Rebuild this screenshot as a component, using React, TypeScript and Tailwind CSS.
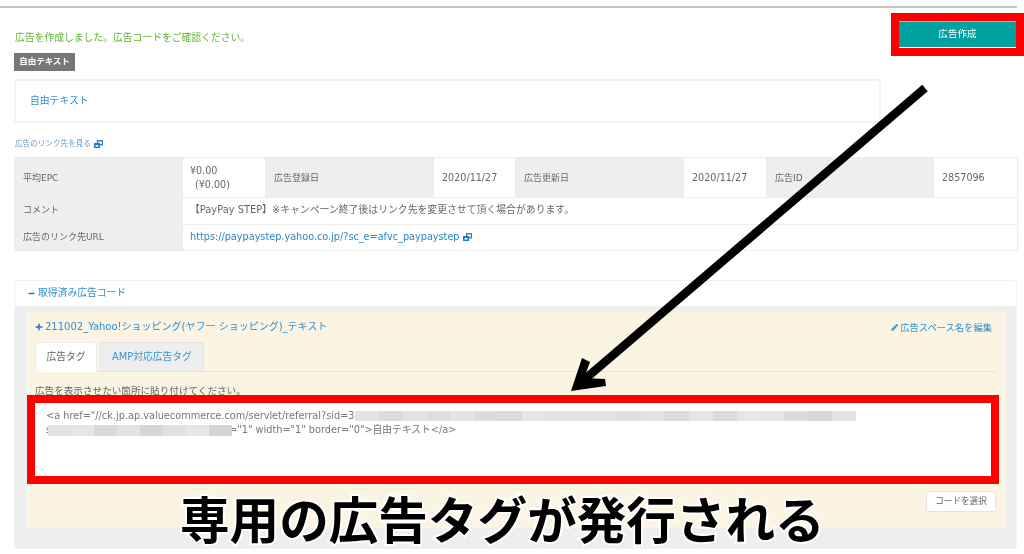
import React from "react";
import { FaMinus, FaPlus, FaPencilAlt } from "react-icons/fa";

const font = "font-['DejaVu_Sans','Noto_Sans_CJK_JP',sans-serif]";

function ExtIcon({ className }: { className?: string }) {
  return (
    <svg viewBox="0 0 9 8" className={className} fill="none" stroke="#1f78c8">
      <rect x="3.5" y="0.75" width="5" height="4" strokeWidth="1.3" />
      <rect x="0.5" y="3.5" width="5" height="4" fill="#1f78c8" strokeWidth="1" stroke="#1f78c8" />
      <rect x="1.6" y="5" width="2.8" height="1.6" fill="#fff" stroke="none" />
    </svg>
  );
}

const th = "bg-[#eeeeee] border border-[#ececec] px-2 text-left font-normal text-[#666] text-[9px] align-middle";
const td = "bg-white border border-[#ececec] px-2 text-[#666] text-[9.6px] align-middle";

const blur1 = [
  "bg-[#e4e4e4]", "bg-[#dcdcdc]", "bg-[#e5e5e5]", "bg-[#dedede]", "bg-[#e5e5e5]", "bg-[#dddddd]", "bg-[#dadada]",
  "bg-[#e6e6e6]", "bg-[#e5e5e5]", "bg-[#e4e4e4]", "bg-[#e2e2e4]", "bg-[#e1e1e3]", "bg-[#e2e2e2]", "bg-[#dbdbdb]",
  "bg-[#e6e6e6]", "bg-[#dbdbdb]", "bg-[#e7e7e7]", "bg-[#e6e6e6]", "bg-[#dddddd]", "bg-[#d8d8d8]", "bg-[#e3e3e3]",
];
const blur2 = [
  "bg-[#e3e3e3]", "bg-[#e6e6e6]", "bg-[#d9d9d9]", "bg-[#e2e2e2]", "bg-[#d6d6d6]", "bg-[#e0e0e0]", "bg-[#e6e6e6]", "bg-[#d4d4d4]",
];

export default function App() {
  return (
    <div className={`relative w-[1024px] h-[554px] overflow-hidden bg-white ${font} blur-[0.35px]`}>
      <div className="w-[1017px] pt-[6px]">
        <div className="h-[2px] bg-[#c4c4c4]" />
        <div className="pl-[14px]">
          <p className="mt-[24px] h-[12px] leading-[12px] pl-[1px] text-[9.8px] text-[#5fb336]">広告を作成しました。広告コードをご確認ください。</p>
          <div className="mt-[9px] w-[61px] h-[18px] leading-[17px] bg-[#777777] text-white text-[8.5px] font-bold text-center">自由テキスト</div>
          <div className="mt-[8px] w-[867px] h-[44px] border-2 border-[#f2f2f2] rounded-[3px] flex items-center pl-[14px] text-[9.8px] text-[#2f8fd0]">自由テキスト</div>
          <div className="mt-[15px] h-[12px] flex items-center gap-[3px] pl-[1px] text-[7.6px] text-[#6f97c4]">
            広告のリンク先を見る
            <ExtIcon className="w-[9px] h-[8px]" />
          </div>
          <table className="mt-[7px] w-[1003px] table-fixed border-collapse">
            <colgroup>
              <col className="w-[168px]" />
              <col className="w-[83px]" />
              <col className="w-[168px]" />
              <col className="w-[82px]" />
              <col className="w-[168px]" />
              <col className="w-[83px]" />
              <col className="w-[167px]" />
              <col className="w-[84px]" />
            </colgroup>
            <tbody>
              <tr className="h-[40px]">
                <th className={`${th} pt-[2px]`}>平均EPC</th>
                <td className={`${td} leading-[14px] pl-[7px]`}>
                  ¥0.00
                  <br />
                  <span className="pl-[5px]">(¥0.00)</span>
                </td>
                <th className={`${th} pt-[2px]`}>広告登録日</th>
                <td className={`${td} pt-[2px]`}>2020/11/27</td>
                <th className={`${th} pt-[2px]`}>広告更新日</th>
                <td className={`${td} pt-[2px]`}>2020/11/27</td>
                <th className={`${th} pt-[2px]`}>広告ID</th>
                <td className={`${td} pt-[2px]`}>2857096</td>
              </tr>
              <tr className="h-[27px]">
                <th className={`${th} pb-[1px]`}>コメント</th>
                <td className={`${td} pl-[7px] pb-[1px] text-[9.85px]`} colSpan={7}>【PayPay STEP】※キャンペーン終了後はリンク先を変更させて頂く場合があります。</td>
              </tr>
              <tr className="h-[26px]">
                <th className={th}>広告のリンク先URL</th>
                <td className={`${td} pl-[7px]`} colSpan={7}>
                  <span className="inline-flex items-center gap-[3px] text-[#2f86c4] text-[9.7px]">
                    https://paypaystep.yahoo.co.jp/?sc_e=afvc_paypaystep
                    <ExtIcon className="w-[9px] h-[8px]" />
                  </span>
                </td>
              </tr>
            </tbody>
          </table>

          <section className="mt-[29px] w-[1003px] h-[269px] border border-[#f2f2f2] rounded-[3px] flex flex-col">
            <div className="h-[25px] shrink-0 flex items-center gap-[3px] pl-[13px] text-[9.8px] text-[#2f8fd0]">
              <FaMinus className="w-[7px] h-[7px] text-[#1f78c8]" />
              取得済み広告コード
            </div>
            <div className="flex-1 bg-[#eeeeee] pt-[6px] pl-[12px] pr-[12px] pb-[20px]">
              <div className="relative h-full w-[978px] bg-[#fcf4e3] pt-[8px] pl-[8px] pr-[8px]">
                <div className="flex items-center justify-between h-[13px] pr-[5px] text-[10px] text-[#2f8fd0]">
                  <span className="flex items-center gap-[2px]">
                    <FaPlus className="w-[8px] h-[8px] text-[#1f78c8]" />
                    211002_Yahoo!ショッピング(ヤフー ショッピング)_テキスト
                  </span>
                  <span className="flex items-center gap-[2px] text-[9.3px] mt-[2px]">
                    <FaPencilAlt className="w-[7px] h-[7px] text-[#3a8cc8]" />
                    広告スペース名を編集
                  </span>
                </div>
                <div className="mt-[9px] h-[30px] flex gap-[3px] border-b border-[#e8e4da]">
                  <div className="w-[62px] h-[30px] bg-white border border-[#eee] border-b-0 rounded-t-[3px] flex items-center justify-center text-[9.8px] text-[#666]">広告タグ</div>
                  <div className="w-[104px] h-[29px] bg-[#eeeeee] border border-[#e4e4e4] border-b-0 rounded-t-[3px] flex items-center justify-center text-[9.8px] text-[#3a96d8]">AMP対応広告タグ</div>
                </div>
                <p className="mt-[12px] h-[13px] leading-[13px] text-[9.6px] text-[#666]">広告を表示させたい箇所に貼り付けてください。</p>
                <div className="mt-[1px] -ml-[8px] w-[972px] h-[84px] bg-white pt-[11px] pl-[19px] text-[9.75px] leading-[14px] text-[#777]">
                  <div className="whitespace-nowrap">&lt;a href="//ck.jp.ap.valuecommerce.com/servlet/referral?sid=3(</div>
                  <div className="whitespace-nowrap">s<span className="inline-block w-[178px]" />="1" width="1" border="0"&gt;自由テキスト&lt;/a&gt;</div>
                </div>
                <div className="flex justify-end pr-[1px] mt-[9px]">
                  <button className="w-[70px] h-[21px] bg-white border border-[#e4e4e4] rounded-[2px] text-[8.6px] text-[#666]">コードを選択</button>
                </div>
              </div>
            </div>
          </section>
        </div>
      </div>

      {/* redaction over the code */}
      <div className="absolute left-[355px] top-[411px] w-[501px] h-[10px] flex">
        {blur1.map((c, i) => (
          <div key={i} className={`flex-1 ${c}`} />
        ))}
      </div>
      <div className="absolute left-[48px] top-[425px] w-[184px] h-[11px] flex">
        {blur2.map((c, i) => (
          <div key={i} className={`flex-1 ${c}`} />
        ))}
      </div>

      {/* annotations */}
      <div className="absolute left-[891px] top-[13px] w-[133px] h-[43px] border-[8px] border-[#ff0000] bg-white">
        <div className="w-[117px] h-[27px] bg-[#00a29f] border-t border-t-[#b5b5b5] border-b border-b-white flex items-center justify-center text-[9.6px] text-white">広告作成</div>
      </div>
      <div className="absolute left-[27px] top-[395px] w-[972px] h-[89px] border-[8px] border-[#ff0000]" />
      <svg className="absolute left-0 top-0 w-[1024px] h-[554px] pointer-events-none" viewBox="0 0 1024 554">
        <line x1="925" y1="88" x2="585" y2="379" stroke="#000" strokeWidth="8.5" />
        <polygon points="571,391 582,358 590,362 584,378 605,379 606,386" fill="#000" />
      </svg>
      <div className="absolute left-[180px] top-[482px] h-[70px] leading-[70px] whitespace-nowrap text-[49.6px] font-bold text-black [-webkit-text-stroke:4px_white] [paint-order:stroke_fill] font-['Noto_Sans_CJK_JP',sans-serif]">
        専用の広告タグが発行される
      </div>
    </div>
  );
}
